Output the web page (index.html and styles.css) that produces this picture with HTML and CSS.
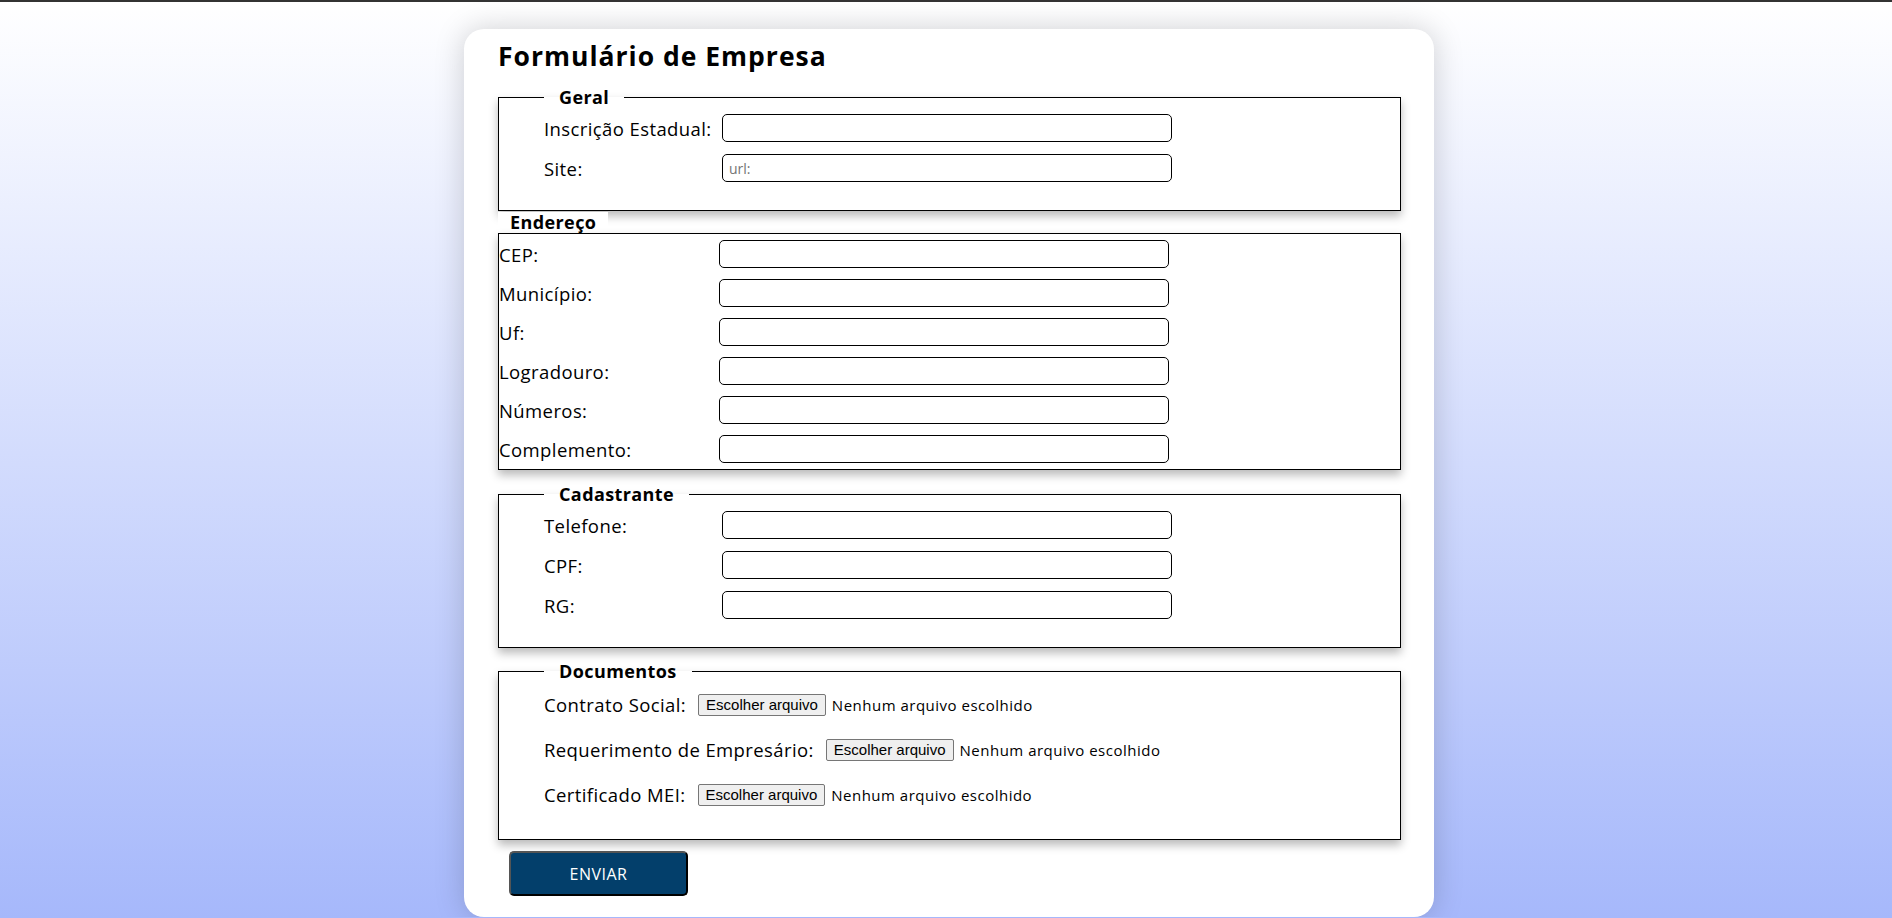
FILE: index.html
```html
<!DOCTYPE html>
<html lang="pt-BR">
<head>
<meta charset="utf-8">
<title>Formulário de Empresa</title>
<link rel="stylesheet" href="styles.css">
</head>
<body>
<main class="card">
  <h1 class="title">Formulário de Empresa</h1>
  <form class="form">
    <fieldset class="group">
      <legend class="legend">Geral</legend>
      <div class="row"><label class="lbl">Inscrição Estadual:</label><input class="field" type="text"></div>
      <div class="row"><label class="lbl">Site:</label><input class="field" type="text" placeholder="url:"></div>
    </fieldset>

    <div class="sec-title">Endereço</div>
    <div class="box">
      <div class="row row-tight"><label class="lbl lbl-wide">CEP:</label><input class="field" type="text"></div>
      <div class="row row-tight"><label class="lbl lbl-wide">Município:</label><input class="field" type="text"></div>
      <div class="row row-tight"><label class="lbl lbl-wide">Uf:</label><input class="field" type="text"></div>
      <div class="row row-tight"><label class="lbl lbl-wide">Logradouro:</label><input class="field" type="text"></div>
      <div class="row row-tight"><label class="lbl lbl-wide">Números:</label><input class="field" type="text"></div>
      <div class="row row-tight"><label class="lbl lbl-wide">Complemento:</label><input class="field" type="text"></div>
    </div>

    <fieldset class="group group-cad">
      <legend class="legend">Cadastrante</legend>
      <div class="row"><label class="lbl">Telefone:</label><input class="field" type="text"></div>
      <div class="row"><label class="lbl">CPF:</label><input class="field" type="text"></div>
      <div class="row"><label class="lbl">RG:</label><input class="field" type="text"></div>
    </fieldset>

    <fieldset class="group group-docs">
      <legend class="legend">Documentos</legend>
      <div class="doc-row"><label class="doc-lbl">Contrato Social:</label><span class="file"><span class="file-btn">Escolher arquivo</span><span class="file-name">Nenhum arquivo escolhido</span></span></div>
      <div class="doc-row"><label class="doc-lbl">Requerimento de Empresário:</label><span class="file"><span class="file-btn">Escolher arquivo</span><span class="file-name">Nenhum arquivo escolhido</span></span></div>
      <div class="doc-row"><label class="doc-lbl">Certificado MEI:</label><span class="file"><span class="file-btn">Escolher arquivo</span><span class="file-name">Nenhum arquivo escolhido</span></span></div>
    </fieldset>

    <button class="submit" type="button">ENVIAR</button>
  </form>
</main>
</body>
</html>
```

FILE: styles.css
```css
* { box-sizing: border-box; }

html {
  margin: 0;
  min-height: 100%;
  background: linear-gradient(180deg, #ffffff 0%, #a6b8fb 100%);
}

body {
  margin: 0;
  padding-left: 6px;
  border-top: 2px solid #333;
  font-family: "Open Sans", "Liberation Sans", sans-serif;
  color: #000;
}

.card {
  width: 970px;
  margin: 27px auto 0;
  padding: 11px 33px 21px 34px;
  background: #fff;
  border-radius: 20px;
  box-shadow: 0 0 30px rgba(0, 0, 0, 0.18);
}

.title {
  margin: 0 0 14px;
  font-size: 26.5px;
  line-height: 32px;
  font-weight: 700;
  letter-spacing: 1px;
}

.form { margin: 0; }

.group {
  margin: 0;
  padding: 6px 0 28px 45px;
  border: 1px solid #000;
  box-shadow: 0 5px 9px rgba(0, 0, 0, 0.28);
  min-width: 0;
}

.legend {
  padding: 0 15px;
  font-size: 18px;
  line-height: 22px;
  font-weight: 700;
  letter-spacing: 0.4px;
}

.row {
  display: flex;
  align-items: center;
  height: 28px;
  margin-bottom: 12px;
}
.row:last-child { margin-bottom: 0; }
.row-tight { margin-bottom: 11px; }

.lbl {
  width: 178px;
  flex: none;
  font-size: 18.5px;
  letter-spacing: 0.4px;
}
.lbl-wide { width: 220px; }

.field {
  width: 450px;
  height: 28px;
  margin: 0;
  padding: 0 6px;
  border: 1px solid #000;
  border-radius: 5px;
  background: #fff;
  font-family: inherit;
  font-size: 14px;
}
.field::placeholder { color: #757575; }

.sec-title {
  width: fit-content;
  margin-top: 1px;
  padding: 0 12px;
  background: #fff;
  font-size: 18px;
  line-height: 21px;
  font-weight: 700;
  letter-spacing: 0.4px;
}

.box {
  border: 1px solid #000;
  padding: 6px 0;
  box-shadow: 0 5px 9px rgba(0, 0, 0, 0.28);
}

.group-cad { margin-top: 13px; }
.group-docs { margin-top: 12px; padding-top: 11px; padding-bottom: 33px; }

.doc-row {
  display: flex;
  align-items: center;
  gap: 12px;
  height: 23px;
  margin-bottom: 22px;
}
.doc-row:last-child { margin-bottom: 0; }

.doc-lbl {
  font-size: 18.5px;
  letter-spacing: 0.4px;
}

.file {
  display: flex;
  align-items: center;
  gap: 6px;
}

.file-btn {
  display: inline-flex;
  align-items: center;
  height: 22px;
  padding: 0 7px;
  border: 1px solid #767676;
  border-radius: 2px;
  background: #efefef;
  font-family: "Liberation Sans", Arial, sans-serif;
  font-size: 15px;
}

.file-name {
  font-size: 15px;
  letter-spacing: 0.5px;
}

.submit {
  display: block;
  width: 179px;
  height: 45px;
  margin: 11px 0 0 11px;
  border: 2px solid;
  border-color: #555 #000 #000 #555;
  border-radius: 5px;
  background: #033f6b;
  color: #fff;
  font-family: inherit;
  font-size: 16px;
  letter-spacing: 0.5px;
}
```
